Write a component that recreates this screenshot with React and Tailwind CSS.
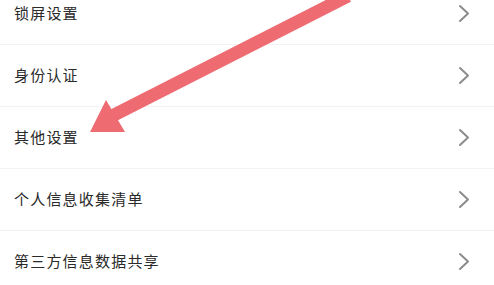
import React from "react";

const items = ["锁屏设置", "身份认证", "其他设置", "个人信息收集清单", "第三方信息数据共享"];

function Chevron() {
  return (
    <svg width="12" height="19" viewBox="0 0 12 19" fill="none">
      <polyline points="2,2 10,9.5 2,17" stroke="#8c8c8c" strokeWidth="2" strokeLinecap="round" strokeLinejoin="round" />
    </svg>
  );
}

export default function App() {
  return (
    <div className="relative w-[494px] h-[285px] overflow-hidden bg-white" style={{ fontFamily: '"Noto Sans CJK SC", "Noto Sans", sans-serif' }}>
      <div className="-mt-[17px] flex flex-col">
        {items.map((t) => (
          <div key={t} className="h-[62px] flex items-center justify-between pl-[14px] pr-[24px] border-b border-[#f3f3f3]">
            <span className="text-[15px] tracking-[1.2px] text-[#2a2a2a]">{t}</span>
            <Chevron />
          </div>
        ))}
      </div>
      <svg className="absolute left-0 top-0 pointer-events-none" width="494" height="285" viewBox="0 0 494 285">
        <line x1="348" y1="-4" x2="112" y2="116" stroke="#ee6b72" strokeWidth="13" />
        <polygon points="90,132 106,100 125,132" fill="#ee6b72" />
      </svg>
    </div>
  );
}
